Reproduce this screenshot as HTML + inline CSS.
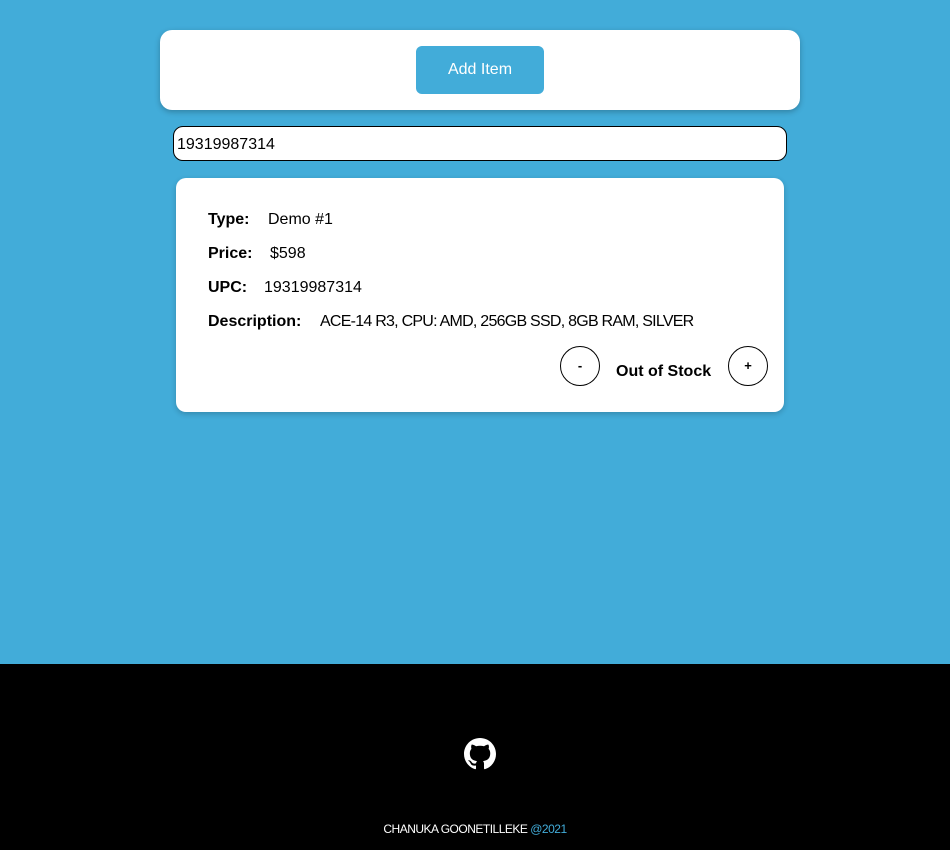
<!DOCTYPE html>
<html><head><style>
body{margin:0;width:950px;height:850px;background:#42acd9;font-family:"Liberation Sans",sans-serif;position:relative;overflow:hidden}
.a{position:absolute}
.top{left:160px;top:30px;width:640px;height:80px;background:#fff;border-radius:12px;box-shadow:0 2px 6px rgba(0,0,0,.25)}
.btn{left:416px;top:46px;width:128px;height:48px;background:#42acd9;border-radius:6px;color:#fff;font-size:16px;line-height:48px;text-align:center}
.inp{left:173px;top:126px;width:614px;height:35px;background:#fff;border:1px solid #000;border-radius:10px;box-sizing:border-box;font-size:16px;line-height:35px;padding-left:3px}
.card{left:176px;top:178px;width:608px;height:234px;background:#fff;border-radius:10px;box-shadow:0 2px 6px rgba(0,0,0,.2)}
.t{font-size:16px;color:#000;white-space:nowrap}
b{font-weight:bold}
.c{width:38px;height:38px;border:1px solid #000;border-radius:50%;text-align:center;line-height:38px;font-size:13px;font-weight:bold}
.foot{left:0;top:664px;width:950px;height:186px;background:#000}
</style></head><body>
<div class="a top"></div>
<div class="a btn">Add Item</div>
<div class="a inp">19319987314</div>
<div class="a card"></div>
<div class="a t" style="left:208px;top:211px"><b>Type:</b><span style="position:absolute;left:60px">Demo #1</span></div>
<div class="a t" style="left:208px;top:245px"><b>Price:</b><span style="position:absolute;left:62px">$598</span></div>
<div class="a t" style="left:208px;top:279px"><b>UPC:</b><span style="position:absolute;left:56px">19319987314</span></div>
<div class="a t" style="left:208px;top:313px"><b>Description:</b><span style="position:absolute;left:112px;letter-spacing:-0.75px">ACE-14 R3, CPU: AMD, 256GB SSD, 8GB RAM, SILVER</span></div>
<div class="a c" style="left:560px;top:346px">-</div>
<div class="a t" style="left:616px;top:363px"><b>Out of Stock</b></div>
<div class="a c" style="left:728px;top:346px">+</div>
<div class="a foot"></div>
<svg class="a" style="left:464px;top:738px" width="32" height="32" viewBox="0 0 16 16"><path fill="#fff" d="M8 0C3.58 0 0 3.58 0 8c0 3.540 2.29 6.53 5.47 7.59.4.07.55-.17.55-.38 0-.19-.01-.82-.01-1.49-2.01.37-2.53-.49-2.69-.94-.09-.23-.48-.94-.82-1.130-.28-.15-.68-.52-.01-.53.63-.01 1.08.58 1.23.82.72 1.21 1.87.87 2.33.66.07-.52.28-.87.51-1.07-1.78-.2-3.64-.89-3.64-3.95 0-.87.31-1.59.82-2.15-.08-.2-.36-1.02.08-2.12 0 0 .67-.21 2.2.82.64-.18 1.32-.27 2-.27.68 0 1.36.09 2 .27 1.53-1.04 2.2-.82 2.2-.82.44 1.1.16 1.92.08 2.12.51.56.82 1.27.82 2.15 0 3.07-1.87 3.75-3.65 3.95.29.25.54.73.54 1.48 0 1.07-.01 1.93-.01 2.2 0 .21.15.46.55.38A8.013 8.013 0 0016 8c0-4.42-3.58-8-8-8z"/></svg>
<div class="a" style="left:0;width:950px;top:822px;text-align:center;color:#fff;font-size:12px;letter-spacing:-0.5px">CHANUKA GOONETILLEKE <span style="color:#42acd9">@2021</span></div>
</body></html>
